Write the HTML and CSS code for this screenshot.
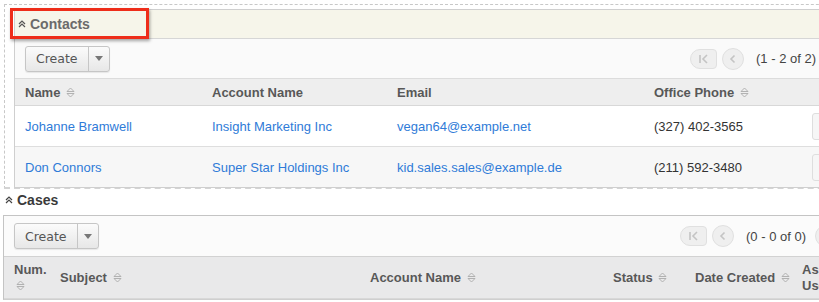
FILE: index.html
```html
<!DOCTYPE html>
<html lang="en">
<head>
    <meta charset="UTF-8">
    <title>Subpanels</title>
    <link rel="stylesheet" href="styles.css">
</head>
<body>
    <!-- Contacts subpanel (highlighted) -->
    <div class="subpanel-drop">
        <div class="panel">
            <div class="panel-head">
                <svg class="collapse" width="8" height="8" viewBox="0 0 8 8"><path d="M1 4 L4 1 L7 4 M1 7 L4 4 L7 7" fill="none" stroke="#555" stroke-width="1.2"/></svg>
                <span class="panel-title">Contacts</span>
                <div class="highlight"></div>
            </div>
            <div class="toolbar">
                <div class="btn-group">
                    <span class="btn">Create</span><span class="btn caret-btn"><span class="caret"></span></span>
                </div>
                <div class="pager">
                    <span class="pg pg-first"><svg width="12" height="10" viewBox="0 0 12 10"><path d="M2 1 V9 M9 1 L5 5 L9 9" fill="none" stroke="#c4c4c4" stroke-width="1.6"/></svg></span>
                    <span class="pg pg-prev"><svg width="10" height="10" viewBox="0 0 10 10"><path d="M6.5 1.5 L3 5 L6.5 8.5" fill="none" stroke="#c4c4c4" stroke-width="1.6"/></svg></span>
                    <span class="pg-text">(1 - 2 of 2)</span>
                </div>
            </div>
            <table class="list contacts">
                <tr class="head">
                    <th class="c-name">Name <i class="sort"></i></th>
                    <th class="c-acct">Account Name</th>
                    <th class="c-email">Email</th>
                    <th class="c-phone">Office Phone <i class="sort"></i></th>
                    <th class="c-act"></th>
                </tr>
                <tr>
                    <td><a href="#">Johanne Bramwell</a></td>
                    <td><a href="#">Insight Marketing Inc</a></td>
                    <td><a href="#">vegan64@example.net</a></td>
                    <td>(327) 402-3565</td>
                    <td class="act"><span class="row-btn"></span></td>
                </tr>
                <tr class="odd">
                    <td><a href="#">Don Connors</a></td>
                    <td><a href="#">Super Star Holdings Inc</a></td>
                    <td><a href="#">kid.sales.sales@example.de</a></td>
                    <td>(211) 592-3480</td>
                    <td class="act"><span class="row-btn"></span></td>
                </tr>
            </table>
        </div>
    </div>

    <!-- Cases subpanel -->
    <div class="subpanel">
        <div class="plain-head">
            <svg class="collapse" width="8" height="8" viewBox="0 0 8 8"><path d="M1 4 L4 1 L7 4 M1 7 L4 4 L7 7" fill="none" stroke="#444" stroke-width="1.2"/></svg>
            <span class="plain-title">Cases</span>
        </div>
        <div class="panel">
            <div class="toolbar">
                <div class="btn-group">
                    <span class="btn">Create</span><span class="btn caret-btn"><span class="caret"></span></span>
                </div>
                <div class="pager">
                    <span class="pg pg-first"><svg width="12" height="10" viewBox="0 0 12 10"><path d="M2 1 V9 M9 1 L5 5 L9 9" fill="none" stroke="#c4c4c4" stroke-width="1.6"/></svg></span>
                    <span class="pg pg-prev"><svg width="10" height="10" viewBox="0 0 10 10"><path d="M6.5 1.5 L3 5 L6.5 8.5" fill="none" stroke="#c4c4c4" stroke-width="1.6"/></svg></span>
                    <span class="pg-text">(0 - 0 of 0)</span>
                    <span class="pg pg-next"></span>
                </div>
            </div>
            <table class="list cases">
                <tr class="head">
                    <th class="k-num">Num.<br><i class="sort"></i></th>
                    <th class="k-subj">Subject <i class="sort"></i></th>
                    <th class="k-acct">Account Name <i class="sort"></i></th>
                    <th class="k-status">Status <i class="sort"></i></th>
                    <th class="k-date">Date Created <i class="sort"></i></th>
                    <th class="k-user">Assigned<br>User</th>
                </tr>
            </table>
        </div>
    </div>
</body>
</html>
```

FILE: styles.css
```css
body {
    margin: 0;
    padding: 0;
    width: 819px;
    height: 302px;
    overflow: hidden;
    background-color: #ffffff;
    font-family: 'Liberation Sans', Arial, sans-serif;
    font-size: 13px;
    color: #333;
}

a {
    color: #2f7bd8;
    text-decoration: none;
}

/* Subpanel com borda tracejada (arrastar) */
.subpanel-drop {
    margin: 4px 0 0 4px;
    width: 880px;
    padding: 4px 0 0 9px;
    border: 1px dashed #c8c8c8;
    border-right: none;
    border-bottom: 2px dashed #d4d4d4;
    box-sizing: border-box;
    height: 185px;
}

.panel {
    border: 1px solid #cfcfcf;
    border-right: none;
    background-color: #fff;
}

.panel-head {
    position: relative;
    height: 28px;
    display: flex;
    align-items: center;
    padding-left: 3px;
    background-color: #f6f5ea;
    border-bottom: 1px solid #d6d6d6;
}

.collapse {
    margin-right: 4px;
}

.panel-title {
    font-size: 14px;
    font-weight: bold;
    color: #6b6b6b;
}

/* Caixa vermelha de destaque */
.highlight {
    position: absolute;
    left: -5px;
    top: -2px;
    width: 133px;
    height: 25px;
    border: 3px solid #ee2d1a;
    box-shadow: 1px 2px 3px rgba(0, 0, 0, 0.35);
}

.toolbar {
    height: 40px;
    width: 805px;
    display: flex;
    align-items: center;
    justify-content: space-between;
    padding: 0 4px 0 10px;
    background-color: #fafafa;
    border-bottom: 1px solid #dcdcdc;
    box-sizing: border-box;
}

.btn-group {
    display: flex;
    height: 26px;
    border: 1px solid #c6c6c6;
    border-radius: 3px;
    box-sizing: border-box;
    background: linear-gradient(#fbfbfb, #e7e7e7);
    box-shadow: 0 1px 1px rgba(0, 0, 0, 0.08);
}

.btn {
    display: flex;
    align-items: center;
    padding: 0 10px;
    font-family: 'DejaVu Sans', Verdana, sans-serif;
    font-size: 12.5px;
    color: #555;
}

.caret-btn {
    padding: 0 6px;
    border-left: 1px solid #c6c6c6;
}

.caret {
    width: 0;
    height: 0;
    border-left: 4px solid transparent;
    border-right: 4px solid transparent;
    border-top: 5px solid #777;
}

.pager {
    display: flex;
    align-items: center;
}

.pg {
    display: flex;
    align-items: center;
    justify-content: center;
    height: 20px;
    background-color: #efefef;
    border: 1px solid #e0e0e0;
    box-sizing: border-box;
}

.pg-first {
    width: 27px;
    border-radius: 10px 4px 4px 10px;
}

.pg-prev {
    width: 22px;
    height: 22px;
    border-radius: 50%;
    margin-left: 5px;
}

.pg-next {
    width: 22px;
    height: 22px;
    border-radius: 50%;
    margin-left: 9px;
    margin-right: -17px;
}

.pg-text {
    margin-left: 12px;
    font-size: 13px;
    color: #444;
}

/* Tabelas */
.list {
    border-collapse: collapse;
    table-layout: fixed;
    width: 880px;
}

.list th {
    text-align: left;
    font-weight: bold;
    color: #585858;
    background-color: #eeeeee;
    border-bottom: 1px solid #d8d8d8;
    padding: 0 10px;
    height: 26px;
    white-space: nowrap;
}

.list td {
    padding: 0 10px;
    height: 40px;
    border-bottom: 1px solid #dedede;
}

.list tr.odd td {
    background-color: #f7f7f7;
    border-bottom: none;
}

.list td.act {
    padding: 0 0 0 10px;
}

.row-btn {
    display: block;
    width: 40px;
    height: 27px;
    border: 1px solid #dedede;
    border-radius: 3px;
    background-color: #f6f6f6;
    box-sizing: border-box;
}

.sort {
    display: inline-block;
    width: 9px;
    height: 11px;
    vertical-align: -1px;
    margin-left: 2px;
    background-image: url("data:image/svg+xml;utf8,<svg xmlns='http://www.w3.org/2000/svg' width='9' height='11' viewBox='0 0 9 11'><path d='M1 4.5 L4.5 1 L8 4.5 Z M1 6.5 L4.5 10 L8 6.5 Z' fill='none' stroke='%23aaa' stroke-width='0.9'/></svg>");
}

.c-name { width: 167px; }
.c-acct { width: 165px; }
.c-email { width: 237px; }
.c-phone { width: 138px; }
.c-act { width: 140px; }

/* Cases */
.plain-head {
    height: 22px;
    display: flex;
    align-items: center;
    padding: 0 0 4px 5px;
}

.plain-title {
    font-size: 14px;
    font-weight: bold;
    color: #3a3a3a;
}

.subpanel .panel {
    margin-left: 3px;
    width: 880px;
    border-left: 1px solid #c4c4c4;
    border-top: 1px solid #c4c4c4;
}

.subpanel .toolbar {
    background-color: #fbfbfb;
    width: 816px;
    padding-right: 0;
    border-bottom: none;
}

.cases th {
    background-color: #e9e9ea;
    height: 41px;
    border-top: 1px solid #d2d2d2;
    line-height: 16px;
}

.k-num { width: 26px; }
.k-subj { width: 290px; }
.k-acct { width: 223px; }
.k-status { width: 62px; }
.k-date { width: 87px; }
.k-user { width: 120px; }
```
